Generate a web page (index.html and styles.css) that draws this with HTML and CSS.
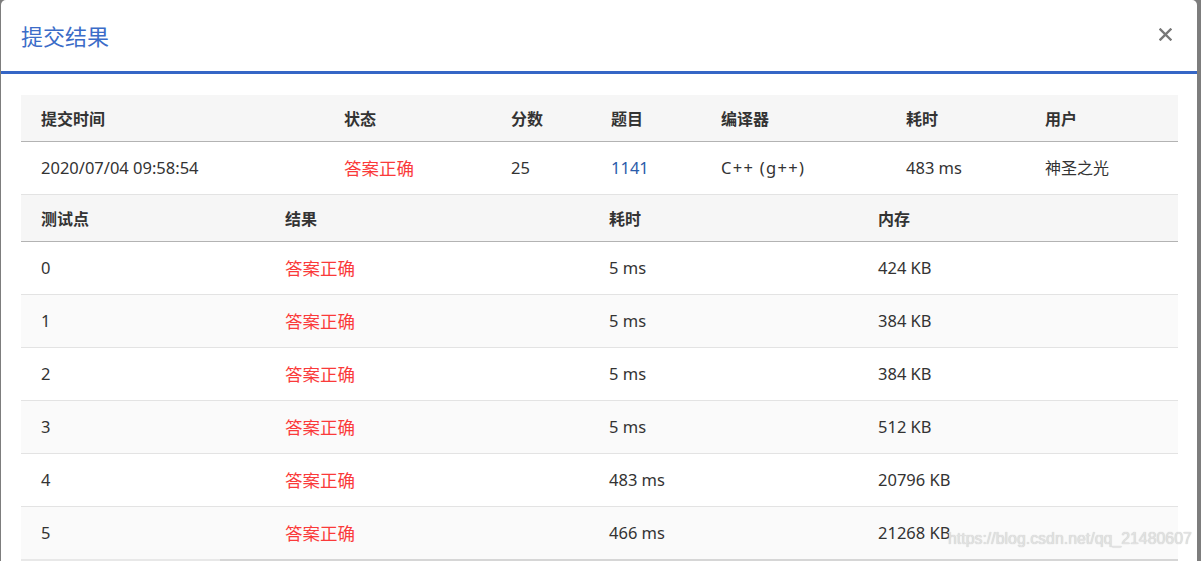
FILE: index.html
```html
<!DOCTYPE html>
<html lang="zh">
<head>
<meta charset="utf-8">
<title>提交结果</title>
<link rel="stylesheet" href="styles.css">
</head>
<body>
<div class="modal">
  <div class="modal-header">
    <h3 class="title">提交结果</h3>
    <svg class="close" width="13" height="13" viewBox="0 0 13 13"><path d="M1.5 1.5 L11.5 11.5 M11.5 1.5 L1.5 11.5" stroke="#777" stroke-width="2.4" stroke-linecap="square" fill="none"/></svg>
  </div>
  <div class="modal-body">
    <div class="grid sub head">
      <div>提交时间</div><div>状态</div><div>分数</div><div>题目</div><div>编译器</div><div>耗时</div><div>用户</div>
    </div>
    <div class="grid sub row">
      <div>2020/07/04 09:58:54</div><div class="ok">答案正确</div><div>25</div><div class="link">1141</div><div class="lang">C++ (g++)</div><div>483 ms</div><div class="cn">神圣之光</div>
    </div>
    <div class="grid cases head">
      <div>测试点</div><div>结果</div><div>耗时</div><div>内存</div>
    </div>
    <div class="grid cases row"><div>0</div><div class="ok">答案正确</div><div>5 ms</div><div>424 KB</div></div>
    <div class="grid cases row alt"><div>1</div><div class="ok">答案正确</div><div>5 ms</div><div>384 KB</div></div>
    <div class="grid cases row"><div>2</div><div class="ok">答案正确</div><div>5 ms</div><div>384 KB</div></div>
    <div class="grid cases row alt"><div>3</div><div class="ok">答案正确</div><div>5 ms</div><div>512 KB</div></div>
    <div class="grid cases row"><div>4</div><div class="ok">答案正确</div><div>483 ms</div><div>20796 KB</div></div>
    <div class="grid cases row alt"><div>5</div><div class="ok">答案正确</div><div>466 ms</div><div>21268 KB</div></div>
    <div class="scrollbar"><span class="track-left"></span><span class="thumb"></span></div>
  </div>
  <div class="watermark">https://blog.csdn.net/qq_21480607</div>
</div>
</body>
</html>
```
FILE: styles.css
```css
html, body {
  margin: 0;
  padding: 0;
  height: 561px;
  overflow: hidden;
  background: #7d7d7d;
}
body {
  font-family: "Noto Sans", "Noto Sans CJK SC", sans-serif;
  font-size: 16.5px;
  color: #333;
}
.modal {
  position: relative;
  margin-left: 1px;
  width: 1196px;
  height: 575px;
  background: #fff;
  border-radius: 5px 5px 0 0;
}
.modal-header {
  display: flex;
  align-items: center;
  justify-content: space-between;
  padding: 0 25px 0 20px;
  border-bottom: 3px solid #3566c6;
  box-sizing: border-box;
  height: 74px;
}
.title {
  margin: 0;
  font-weight: normal;
  font-size: 22px;
  color: #3b6cc8;
  font-family: "Noto Sans CJK SC", sans-serif;
  margin-top: -1px;
}
.close {
  display: block;
  margin-top: -2px;
}
.modal-body {
  padding: 21px 19px 0 20px;
}
.grid {
  display: grid;
  align-items: center;
}
.grid > div {
  padding-left: 20px;
  white-space: nowrap;
}
.row > div {
  padding-bottom: 2px;
}
.sub {
  grid-template-columns: 303px 167px 100px 110px 185px 139px 153px;
}
.cases {
  grid-template-columns: 244px 324px 269px 320px;
}
.head {
  background: #f6f6f6;
  height: 46px;
  border-bottom: 1px solid #b3b3b3;
  font-weight: bold;
  font-family: "Noto Sans CJK SC", sans-serif;
  font-size: 16px;
  color: #333;
}
.row {
  height: 52px;
  border-bottom: 1px solid #e3e3e3;
}
.alt {
  background: #fafafa;
}
.ok {
  color: #fa3a3a;
  font-size: 17.5px;
  font-family: "Noto Sans CJK SC", sans-serif;
}
.cn {
  font-family: "Noto Sans CJK SC", sans-serif;
  font-size: 16px;
}
.lang {
  letter-spacing: 1.3px;
}
.link {
  color: #2a5caa;
}
.scrollbar {
  display: flex;
  height: 3px;
  margin-top: -1px;
}
.track-left {
  width: 199px;
  background: #e8e8e8;
}
.thumb {
  flex: 1;
  background: #d6d6d6;
}
.watermark {
  position: absolute;
  left: 947px;
  top: 530px;
  font-family: "Liberation Sans", sans-serif;
  font-size: 15.9px;
  color: #e2e2e2;
  text-shadow: 0 0 1px #bbb;
}
```
